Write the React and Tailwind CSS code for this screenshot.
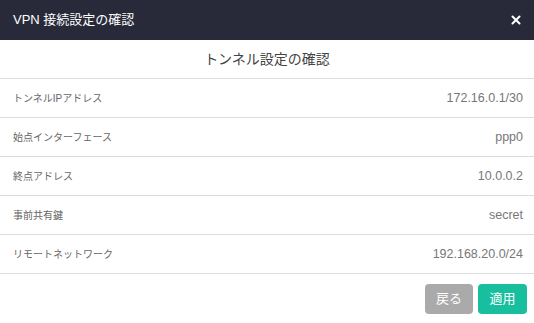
import { X } from "lucide-react";

const rows = [
  { label: "トンネルIPアドレス", value: "172.16.0.1/30" },
  { label: "始点インターフェース", value: "ppp0" },
  { label: "終点アドレス", value: "10.0.0.2" },
  { label: "事前共有鍵", value: "secret" },
  { label: "リモートネットワーク", value: "192.168.20.0/24" },
];

export default function App() {
  return (
    <div
      className="w-[534px] h-[323px] bg-white flex flex-col"
      style={{ fontFamily: '"Liberation Sans", "Noto Sans CJK JP", sans-serif' }}
    >
      {/* header */}
      <div className="h-[40px] bg-[#282a3a] flex items-center justify-between pl-[13px] pr-[11px]">
        <span className="text-white text-[13px]">VPN 接続設定の確認</span>
        <X className="text-white w-[14px] h-[14px]" strokeWidth={3.5} />
      </div>

      <div className="h-[39px] border-b border-[#dcdcdc] flex items-center justify-center">
        <span className="text-[14px] text-[#444]">トンネル設定の確認</span>
      </div>

      {rows.map((r) => (
        <div
          key={r.label}
          className="h-[39px] border-b border-[#dcdcdc] flex items-center justify-between pl-[13px] pr-[11px]"
        >
          <span className="text-[10px] text-[#666]">{r.label}</span>
          <span className="text-[12.5px] text-[#777]">{r.value}</span>
        </div>
      ))}

      <div className="flex justify-end gap-[5px] pt-[10px] pr-[7px]">
        <button className="h-[30px] w-[48px] rounded bg-[#aaaaaa] text-white text-[13px]">
          戻る
        </button>
        <button className="h-[30px] w-[49px] rounded bg-[#17bf9f] text-white text-[13px]">
          適用
        </button>
      </div>
    </div>
  );
}
